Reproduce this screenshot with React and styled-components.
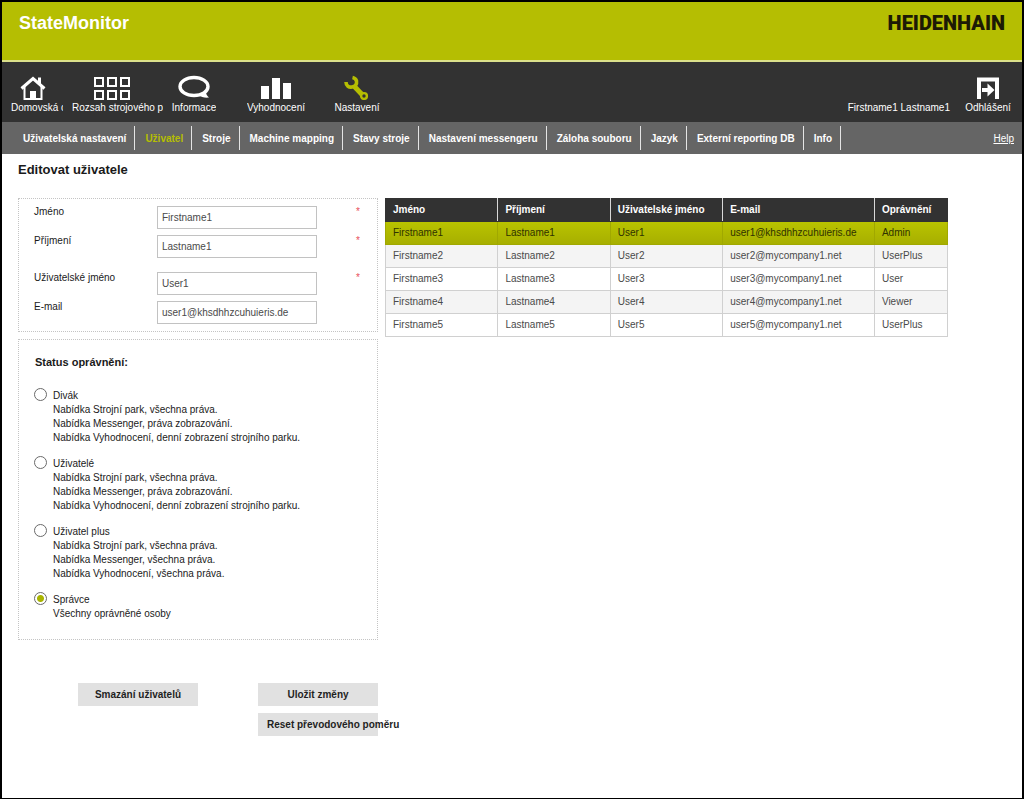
import React, { useState } from "react";
import styled, { createGlobalStyle, css } from "styled-components";

const Global = createGlobalStyle`
  *, *::before, *::after { box-sizing: border-box; }
  body {
    margin: 0;
    background: #fff;
    color: #1a1a1a;
    font-family: "Liberation Sans", Arial, sans-serif;
    font-size: 10px;
    line-height: 14px;
  }
`;

const Page = styled.div`
  min-height: 100vh;
  border: 2px solid #000;
  background: #fff;
`;

const Header = styled.header`
  display: flex;
  justify-content: space-between;
  align-items: flex-start;
  height: 60px;
  padding: 10px 17px;
  background: #b5be02;
  border-bottom: 2px solid #dbe08a;
`;

const AppName = styled.div`
  color: #fff;
  font-size: 18px;
  font-weight: bold;
  line-height: 22px;
`;

const Brand = styled.div`
  color: #1d1a05;
  font-family: Roboto, "Liberation Sans", sans-serif;
  font-size: 20px;
  font-weight: 900;
  line-height: 22px;
`;

const MainBar = styled.div`
  display: flex;
  justify-content: space-between;
  height: 60px;
  padding: 12px 10px 0 9px;
  background: #323232;
`;

const MainNav = styled.nav`
  display: flex;
`;

const NavItem = styled.a`
  display: flex;
  flex-direction: column;
  align-items: center;
  width: ${(p) => p.$width}px;
  margin-right: ${(p) => p.$gap || 0}px;
  color: #fff;
  text-decoration: none;
  svg {
    display: block;
    height: 26px;
    flex: none;
  }
`;

const NavLabel = styled.span`
  align-self: ${(p) => (p.$clip ? "flex-start" : "center")};
  width: ${(p) => (p.$clip ? `${p.$clip}px` : "auto")};
  padding-top: 1px;
  overflow: hidden;
  white-space: nowrap;
`;

const Account = styled.div`
  display: flex;
  align-items: flex-end;
  gap: 14px;
  height: 41px;
  color: #fff;
`;

const SubNav = styled.nav`
  display: flex;
  align-items: center;
  height: 32px;
  padding: 0 8px 0 11px;
  background: #656565;
`;

const SubLink = styled.a`
  padding: 2px 8px 0 10px;
  border-right: 1px solid #e4e4e4;
  color: ${(p) => (p.$active ? "#b5be02" : "#fff")};
  font-weight: bold;
  line-height: 22px;
  text-decoration: none;
  white-space: nowrap;
`;

const HelpLink = styled.a`
  margin-left: auto;
  padding-top: 2px;
  color: #fff;
`;

const Content = styled.main`
  padding: 7px 16px 62px;
`;

const Title = styled.h1`
  margin: 0 0 19px;
  font-size: 13px;
  line-height: 18px;
`;

const Columns = styled.div`
  display: flex;
  align-items: flex-start;
  gap: 7px;
`;

const FormColumn = styled.form`
  display: flex;
  flex-direction: column;
  flex: none;
  gap: 7px;
  width: 360px;
`;

const Panel = styled.section`
  border: 1px dotted #c4c4c4;
  padding: ${(p) => (p.$roomy ? "14px 15px 18px" : "7px 15px")};
`;

const Field = styled.div`
  display: grid;
  grid-template-columns: 123px 160px 1fr;
  height: 23px;
  margin-top: ${(p) => (p.$first ? 0 : p.$apart ? 14 : 6)}px;
`;

const FieldLabel = styled.label`
  line-height: 12px;
`;

const TextInput = styled.input`
  width: 100%;
  height: 23px;
  padding: 0 4px;
  border: 1px solid #c2c2c2;
  background: #fff;
  color: #4a4a4a;
  font: inherit;
`;

const Required = styled.span`
  padding-left: 39px;
  color: #e8505b;
  line-height: 12px;
`;

const Group = styled.fieldset`
  margin: 0;
  padding: 0;
  border: 0;
`;

const GroupTitle = styled.legend`
  margin-bottom: 18px;
  padding: 0 0 0 1px;
  font-size: 11px;
  font-weight: bold;
  line-height: 16px;
`;

const Role = styled.label`
  display: flex;
  gap: 6px;
  margin-bottom: ${(p) => (p.$last ? 0 : 11)}px;
`;

const Radio = styled.input`
  appearance: none;
  flex: none;
  width: 13px;
  height: 13px;
  margin: 0;
  border: 1px solid #6a6a6a;
  border-radius: 50%;
  background: #fff;
  ${(p) => p.checked && css`
    background: radial-gradient(circle, #a9b400 3px, #fff 4px);
  `}
`;

const RoleText = styled.span`
  padding-top: 1px;
`;

const RoleLine = styled.span`
  display: block;
`;

const Actions = styled.div`
  display: grid;
  grid-template-columns: 120px 120px;
  justify-content: end;
  gap: 7px 60px;
  padding-top: 36px;
`;

const ActionButton = styled.button`
  grid-column: ${(p) => p.$column};
  height: 23px;
  padding: 0 9px;
  border: 0;
  background: #e1e1e1;
  color: #1f1f1f;
  font: inherit;
  font-weight: bold;
  white-space: nowrap;
`;

const TableHolder = styled.div`
  flex: 1;
  max-width: 563px;
`;

const Users = styled.table`
  width: 100%;
  border-collapse: collapse;
  table-layout: fixed;
`;

const Col = styled.col`
  width: ${(p) => p.$share}%;
`;

const HeadCell = styled.th`
  height: 23px;
  padding: 0 7px;
  border: 1px solid #323232;
  border-right-color: #d8d8d8;
  background: #323232;
  color: #fff;
  font-weight: bold;
  text-align: left;
  &:last-child { border-right-color: #323232; }
`;

const Row = styled.tr`
  background: ${(p) => (p.$selected ? "linear-gradient(#b9c300, #a6ae00)" : p.$shaded ? "#f4f4f4" : "#fff")};
  color: ${(p) => (p.$selected ? "#2f3200" : "#4a4a4a")};
  td { border-color: ${(p) => (p.$selected ? "#a0a800" : "#d0d0d0")}; }
`;

const Cell = styled.td`
  height: 23px;
  padding: 0 7px;
  border: 1px solid;
`;

const HomeIcon = () => (
  <svg width="26" height="26" viewBox="0 0 26 26" fill="none" stroke="#fff" aria-hidden="true">
    <path d="M1.500 14.500 13 4.500 24.500 14.500" strokeWidth="3" />
    <path d="M19.500 3.500v7" strokeWidth="3" />
    <path d="M4.500 13v12h17V13" strokeWidth="2" />
    <path d="M10 25v-8h6v8z" fill="#fff" stroke="none" />
  </svg>
);

const GridIcon = () => (
  <svg width="38" height="26" viewBox="0 0 38 26" fill="none" stroke="#fff" strokeWidth="2" aria-hidden="true">
    {[2, 15, 28].map((x) => [4, 17].map((y) => <rect key={`${x}-${y}`} x={x} y={y} width="8" height="8" />))}
  </svg>
);

const ChatIcon = () => (
  <svg width="34" height="26" viewBox="0 0 34 26" aria-hidden="true">
    <ellipse cx="17" cy="12.500" rx="14" ry="9" fill="none" stroke="#fff" strokeWidth="3.400" />
    <path d="M21 21c3 2 7 3 11 2.500-2-1.500-3-3-3-6z" fill="#fff" />
  </svg>
);

const ChartIcon = () => (
  <svg width="32" height="26" viewBox="0 0 32 26" fill="#fff" aria-hidden="true">
    <path d="M1 12h8v13H1zM12 4h8v21h-8zM23 9h8v16h-8z" />
  </svg>
);

const WrenchIcon = () => (
  <svg width="26" height="28" viewBox="0 0 26 26" fill="none" stroke="#b5be02" aria-hidden="true">
    <path d="M2 8c0 4 3 5.500 6 5 3.500-.5 5-3 4.500-6C12 5 11 4 8.500 3.500" strokeWidth="3.600" />
    <path d="M9.500 11.500 18 20.500" strokeWidth="5" />
    <circle cx="20" cy="22" r="2.900" strokeWidth="2.400" />
  </svg>
);

const LogoutIcon = () => (
  <svg width="22" height="26" viewBox="0 0 22 26" aria-hidden="true">
    <path d="M2 25V5.500h18V25" fill="none" stroke="#fff" strokeWidth="4" />
    <path d="M5 14h5.500V9.500l7 6.500-7 6.500V18H5z" fill="#fff" />
  </svg>
);

const mainItems = [
  { label: "Domovská obrazovka", Icon: HomeIcon, width: 44, gap: 17, clip: 52 },
  { label: "Rozsah strojového parku", Icon: GridIcon, width: 79, gap: 2, clip: 91 },
  { label: "Informace", Icon: ChatIcon, width: 82 },
  { label: "Vyhodnocení", Icon: ChartIcon, width: 82 },
  { label: "Nastavení", Icon: WrenchIcon, width: 80 },
];

const subItems = [
  "Uživatelská nastavení", "Uživatel", "Stroje", "Machine mapping", "Stavy stroje",
  "Nastavení messengeru", "Záloha souboru", "Jazyk", "Externí reporting DB", "Info",
];

const fields = [
  { id: "first", label: "Jméno", value: "Firstname1", required: true },
  { id: "last", label: "Příjmení", value: "Lastname1", required: true },
  { id: "user", label: "Uživatelské jméno", value: "User1", required: true, apart: true },
  { id: "email", label: "E-mail", value: "user1@khsdhhzcuhuieris.de" },
];

const roles = [
  ["Divák", "Nabídka Strojní park, všechna práva.", "Nabídka Messenger, práva zobrazování.", "Nabídka Vyhodnocení, denní zobrazení strojního parku."],
  ["Uživatelé", "Nabídka Strojní park, všechna práva.", "Nabídka Messenger, práva zobrazování.", "Nabídka Vyhodnocení, denní zobrazení strojního parku."],
  ["Uživatel plus", "Nabídka Strojní park, všechna práva.", "Nabídka Messenger, všechna práva.", "Nabídka Vyhodnocení, všechna práva."],
  ["Správce", "Všechny oprávněné osoby"],
];

const columns = [
  ["Jméno", 20], ["Příjmení", 20], ["Uživatelské jméno", 20], ["E-mail", 27], ["Oprávnění", 13],
];

const users = [
  ["Firstname1", "Lastname1", "User1", "user1@khsdhhzcuhuieris.de", "Admin"],
  ["Firstname2", "Lastname2", "User2", "user2@mycompany1.net", "UserPlus"],
  ["Firstname3", "Lastname3", "User3", "user3@mycompany1.net", "User"],
  ["Firstname4", "Lastname4", "User4", "user4@mycompany1.net", "Viewer"],
  ["Firstname5", "Lastname5", "User5", "user5@mycompany1.net", "UserPlus"],
];

export default function App() {
  const [role, setRole] = useState(3);
  return (
    <Page>
      <Global />
      <Header>
        <AppName>StateMonitor</AppName>
        <Brand>HEIDENHAIN</Brand>
      </Header>
      <MainBar>
        <MainNav>
          {mainItems.map(({ label, Icon, width, gap, clip }) => (
            <NavItem key={label} href="#" $width={width} $gap={gap}>
              <Icon />
              <NavLabel $clip={clip}>{label}</NavLabel>
            </NavItem>
          ))}
        </MainNav>
        <Account>
          <span>Firstname1 Lastname1</span>
          <NavItem href="#" $width={48}>
            <LogoutIcon />
            <NavLabel>Odhlášení</NavLabel>
          </NavItem>
        </Account>
      </MainBar>
      <SubNav>
        {subItems.map((item) => (
          <SubLink key={item} href="#" $active={item === "Uživatel"}>{item}</SubLink>
        ))}
        <HelpLink href="#">Help</HelpLink>
      </SubNav>
      <Content>
        <Title>Editovat uživatele</Title>
        <Columns>
          <FormColumn onSubmit={(e) => e.preventDefault()}>
            <Panel>
              {fields.map((f, i) => (
                <Field key={f.id} $first={i === 0} $apart={f.apart}>
                  <FieldLabel htmlFor={f.id}>{f.label}</FieldLabel>
                  <TextInput id={f.id} type="text" defaultValue={f.value} />
                  {f.required && <Required>*</Required>}
                </Field>
              ))}
            </Panel>
            <Panel $roomy>
              <Group>
                <GroupTitle>Status oprávnění:</GroupTitle>
                {roles.map((lines, i) => (
                  <Role key={lines[0]} $last={i === roles.length - 1}>
                    <Radio type="radio" name="role" checked={role === i} onChange={() => setRole(i)} />
                    <RoleText>
                      {lines.map((line) => <RoleLine key={line}>{line}</RoleLine>)}
                    </RoleText>
                  </Role>
                ))}
              </Group>
            </Panel>
            <Actions>
              <ActionButton type="button" $column={1}>Smazání uživatelů</ActionButton>
              <ActionButton type="submit" $column={2}>Uložit změny</ActionButton>
              <ActionButton type="reset" $column={2}>Reset převodového poměru</ActionButton>
            </Actions>
          </FormColumn>
          <TableHolder>
            <Users>
              <colgroup>
                {columns.map(([name, share]) => <Col key={name} $share={share} />)}
              </colgroup>
              <thead>
                <tr>{columns.map(([name]) => <HeadCell key={name} scope="col">{name}</HeadCell>)}</tr>
              </thead>
              <tbody>
                {users.map((cells, i) => (
                  <Row key={cells[0]} $selected={i === 0} $shaded={i % 2 === 1}>
                    {cells.map((cell) => <Cell key={cell}>{cell}</Cell>)}
                  </Row>
                ))}
              </tbody>
            </Users>
          </TableHolder>
        </Columns>
      </Content>
    </Page>
  );
}
